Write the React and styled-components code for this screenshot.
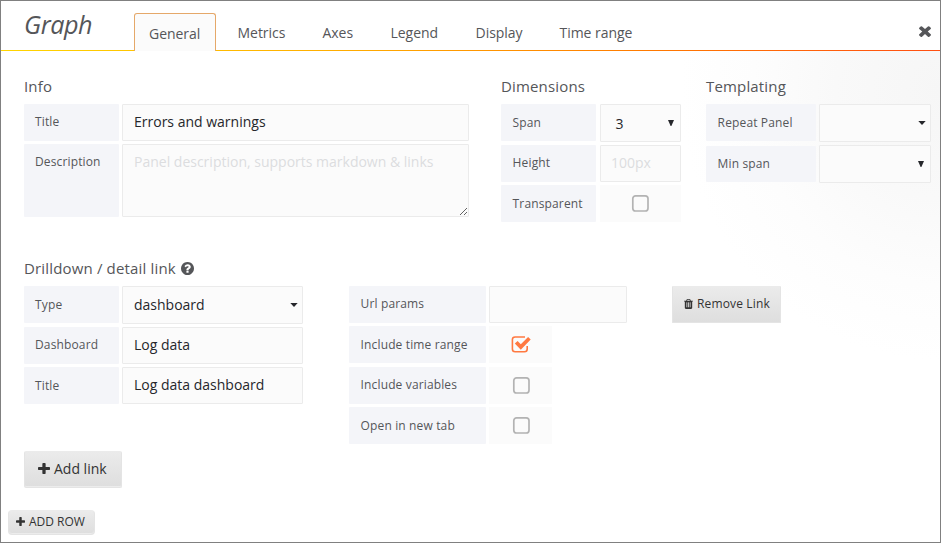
import React from "react";
import styled, { createGlobalStyle } from "styled-components";

const GlobalStyle = createGlobalStyle`
  *, *::before, *::after { box-sizing: border-box; }
  body { margin: 0; background: #fff; overflow: hidden; }
  body, button, input, textarea { font-family: "Open Sans", sans-serif; }
`;

const Frame = styled.div`
  width: 941px;
  height: 543px;
  border: 1px solid #808080;
  display: flex;
  flex-direction: column;
  color: #555659;
  background: #fff;
`;

const Header = styled.header`
  flex: none;
  height: 50px;
  display: flex;
  align-items: flex-start;
  padding: 0 9px 0 23px;
  background: linear-gradient(90deg, #ffd500, #ffaa00 38%, #ff7800 70%, #ff4f12) bottom / 100% 1px no-repeat;
`;

const PanelTitle = styled.h1`
  margin: 0;
  width: 110px;
  padding-top: 4px;
  font-size: 25.2px;
  line-height: 38px;
  font-weight: 400;
  font-style: italic;
  letter-spacing: -0.45px;
`;

const Tabs = styled.nav`
  flex: 1;
  display: flex;
`;

const Tab = styled.a`
  height: ${(p) => (p.$active ? 38 : 37)}px;
  margin: ${(p) => (p.$active ? "12px 7px 0 0" : "13px 7px 0 0")};
  padding: 0 ${(p) => (p.$active ? 14 : 13.5)}px;
  border: 1px solid ${(p) => (p.$active ? "#e5a869" : "transparent")};
  border-bottom: 0;
  border-radius: 3px 3px 0 0;
  background: ${(p) => (p.$active ? "#fbfbfb" : "transparent")};
  width: ${(p) => p.$w}px;
  line-height: ${(p) => (p.$active ? 40 : 36)}px;
  font-size: 14px;
  letter-spacing: -0.03px;
  white-space: nowrap;
`;

const CloseButton = styled.button`
  display: flex;
  margin: 24px 0 0;
  padding: 0;
  border: 0;
  background: none;
  color: #555659;
`;

const Body = styled.main`
  flex: 1;
  display: flex;
  flex-direction: column;
  align-items: flex-start;
  padding: 23px 0 0 23px;
  background: radial-gradient(ellipse 260px 270px at 100% 8%, #f6f6f6 0%, #f9f9f9 40%, #fdfdfd 72%, rgba(255, 255, 255, 0) 100%);
`;

const TopSections = styled.div`
  display: flex;
  height: 182px;
`;

const Section = styled.section`
  width: ${(p) => p.$w}px;
  margin-right: ${(p) => p.$gap || 0}px;
`;

const Heading = styled.h2`
  display: flex;
  align-items: center;
  gap: 5px;
  height: 24px;
  margin: 0 0 6px;
  font-size: 15px;
  font-weight: 400;
  letter-spacing: 0.16px;
  white-space: nowrap;
`;

const Rows = styled.div`
  display: flex;
  flex-direction: column;
  width: ${(p) => p.$w}px;
`;

const Row = styled.div`
  display: flex;
  align-items: flex-start;
  gap: ${(p) => p.$gap || 3}px;
  height: ${(p) => p.$h || 41}px;
`;

const Label = styled.label`
  flex: none;
  width: ${(p) => p.$w || 95}px;
  height: ${(p) => p.$h || 37}px;
  margin-top: ${(p) => p.$top || 0}px;
  padding-left: ${(p) => (p.$w ? 11.6 : 11)}px;
  border-radius: 1px;
  background: #f4f5f9;
  font-size: 12px;
  line-height: ${(p) => p.$line || 36}px;
  letter-spacing: 0.14px;
  white-space: nowrap;
`;

const fieldStyle = `
  border: 1px solid #ebebeb;
  border-radius: 1px;
  background: #fbfbfb;
  font-size: 14px;
  color: #26272b;
  outline: 0;
  margin: 0;
  &::placeholder { color: #dcdddf; opacity: 1; }
`;

const Input = styled.input`
  ${fieldStyle}
  flex: 1;
  min-width: 0;
  height: 37px;
  padding: 0 ${(p) => (p.$left ? 10 : 11)}px 2px;
`;

const TextArea = styled.textarea`
  ${fieldStyle}
  flex: 1;
  height: 73px;
  padding: 7px 11px;
  line-height: 19px;
  resize: vertical;
`;

const Select = styled.div`
  ${fieldStyle}
  flex: 1;
  height: 38px;
  display: flex;
  align-items: center;
  justify-content: space-between;
  padding: 0 ${(p) => p.$right}px ${(p) => p.$lift || 0}px ${(p) => p.$left || 11}px;
`;

const CheckCell = styled.div`
  width: ${(p) => p.$w || 63}px;
  height: 37px;
  display: flex;
  align-items: center;
  justify-content: center;
  padding-right: ${(p) => (p.$w ? 1 : 0)}px;
  background: #fbfbfb;
`;

const Links = styled.div`
  display: flex;
  align-items: flex-start;
`;

const LinkColumn = styled(Rows)`
  margin-right: ${(p) => p.$gap}px;
`;

const Button = styled.button`
  display: flex;
  align-items: center;
  justify-content: flex-start;
  gap: ${(p) => p.$gap || 3}px;
  width: ${(p) => p.$w}px;
  height: ${(p) => p.$h || 37}px;
  margin: 0;
  padding: 0 0 2px ${(p) => p.$left}px;
  border: 1px solid #e4e4e4;
  border-top-color: #ebebeb;
  border-radius: ${(p) => p.$radius || 1}px;
  background: linear-gradient(#ebebeb, #dedede);
  box-shadow: ${(p) => (p.$raised ? "inset 0 -1px 0 #ececec" : "none")};
  font-size: ${(p) => p.$size}px;
  letter-spacing: ${(p) => p.$spacing || 0}px;
  color: #333;
  white-space: nowrap;
`;

const AddRowButton = styled(Button)`
  margin: 22px 0 0 -16px;
`;

const Glyph = styled.svg`
  flex: none;
  display: block;
  fill: currentColor;
`;

const paths = {
  times:
    "M1490 1322q0 40-28 68l-136 136q-28 28-68 28t-68-28l-294-294-294 294q-28 28-68 28t-68-28l-136-136q-28-28-28-68t28-68l294-294-294-294q-28-28-28-68t28-68l136-136q28-28 68-28t68 28l294 294 294-294q28-28 68-28t68 28l136 136q28 28 28 68t-28 68l-294 294 294 294q28 28 28 68z",
  plus:
    "M1600 736v192q0 40-28 68t-68 28h-416v416q0 40-28 68t-68 28h-192q-40 0-68-28t-28-68v-416h-416q-40 0-68-28t-28-68v-192q0-40 28-68t68-28h416v-416q0-40 28-68t68-28h192q40 0 68 28t28 68v416h416q40 0 68 28t28 68z",
  question:
    "M1024 1376v-192q0-14-9-23t-23-9h-192q-14 0-23 9t-9 23v192q0 14 9 23t23 9h192q14 0 23-9t9-23zm256-672q0-88-55.5-163t-138.5-116-170-41q-243 0-371 213-15 24 8 42l132 100q7 6 19 6 16 0 25-12 53-68 86-92 34-24 86-24 48 0 85.5 26t37.5 59q0 38-20 61t-68 45q-63 28-115.5 86.5t-52.5 125.5v36q0 14 9 23t23 9h192q14 0 23-9t9-23q0-19 21.5-49.5t54.5-49.5q32-18 49-28.5t46-35 44.5-48 28-60.5 12.5-81zm384 192q0 209-103 385.5t-279.5 279.5-385.5 103-385.5-103-279.5-279.5-103-385.5 103-385.5 279.5-279.5 385.5-103 385.5 103 279.5 279.5 103 385.5z",
  trash:
    "M704 1376v-704q0-14-9-23t-23-9h-64q-14 0-23 9t-9 23v704q0 14 9 23t23 9h64q14 0 23-9t9-23zm256 0v-704q0-14-9-23t-23-9h-64q-14 0-23 9t-9 23v704q0 14 9 23t23 9h64q14 0 23-9t9-23zm256 0v-704q0-14-9-23t-23-9h-64q-14 0-23 9t-9 23v704q0 14 9 23t23 9h64q14 0 23-9t9-23zm-544-992h448l-48-117q-7-9-17-11h-317q-10 2-17 11zm928 32v64q0 14-9 23t-23 9h-96v948q0 83-47 143.5t-113 60.5h-832q-66 0-113-58.5t-47-141.5v-952h-96q-14 0-23-9t-9-23v-64q0-14 9-23t23-9h309l70-167q15-37 54-63t79-26h320q40 0 79 26t54 63l70 167h309q14 0 23 9t9 23z",
};

const Icon = ({ name, w, box = "128 128 1536 1536", h = w }) => (
  <Glyph width={w} height={h} viewBox={box} preserveAspectRatio="none">
    <path d={paths[name]} />
  </Glyph>
);

const Arrow = ({ caret }) =>
  caret ? (
    <Glyph width="8" height="4" viewBox="0 0 8 4"><path d="M.3 0h7.4L4 4z" /></Glyph>
  ) : (
    <Glyph width="6" height="6" viewBox="0 0 6 6"><path d="M0 0h6L3.4 6h-.8z" /></Glyph>
  );

const Check = ({ checked }) => (
  <Glyph width="22" height="19" viewBox="0 0 22 19">
    {checked ? (
      <>
        <path
          d="M15 2H5.1Q2.4 2 2.4 4.6v9.4q0 2.7 2.7 2.7h9.4q2.7 0 2.7-2.7V11"
          fill="none"
          stroke="#ff7941"
          strokeWidth="1.6"
        />
        <path d="M4.8 8.6l2.8-2.7 3.2 3.3 7.3-7.2 2.6 2.6-9.9 10.2z" fill="#ff7941" />
      </>
    ) : (
      <rect x="3.8" y="1.8" width="15.2" height="15.2" rx="2.8" fill="none" stroke="#b3b3b3" strokeWidth="1.7" />
    )}
  </Glyph>
);

const tabs = [
  ["General", 82],
  ["Metrics", 78],
  ["Axes", 61],
  ["Legend", 78],
  ["Display", 77],
  ["Time range", 110],
];

export default function App() {
  return (
    <>
      <GlobalStyle />
      <Frame>
        <Header>
          <PanelTitle>Graph</PanelTitle>
          <Tabs>
            {tabs.map(([name, w], i) => (
              <Tab key={name} $active={i === 0} $w={w}>{name}</Tab>
            ))}
          </Tabs>
          <CloseButton aria-label="Close">
            <Icon name="times" w={12} box="302 238 1188 1316" />
          </CloseButton>
        </Header>
        <Body>
          <TopSections>
            <Section $w={445} $gap={32}>
              <Heading>Info</Heading>
              <Row $h={40}>
                <Label>Title</Label>
                <Input defaultValue="Errors and warnings" />
              </Row>
              <Row>
                <Label $h={73}>Description</Label>
                <TextArea placeholder="Panel description, supports markdown & links" />
              </Row>
            </Section>
            <Section $w={180} $gap={25}>
              <Heading>Dimensions</Heading>
              <Row $gap={4}>
                <Label $w={95} $line={38}>Span</Label>
                <Select $right={6} $left={14.5}>3<Arrow /></Select>
              </Row>
              <Row $gap={4} $h={40}>
                <Label $w={95}>Height</Label>
                <Input placeholder="100px" $left />
              </Row>
              <Row $gap={4}>
                <Label $w={95} $line={38}>Transparent</Label>
                <CheckCell $w={81}><Check /></CheckCell>
              </Row>
            </Section>
            <Section $w={225}>
              <Heading>Templating</Heading>
              <Row>
                <Label $w={110} $line={38}>Repeat Panel</Label>
                <Select $right={4}><span /><Arrow caret /></Select>
              </Row>
              <Row>
                <Label $w={110} $top={1} $h={36}>Min span</Label>
                <Select $right={6}><span /><Arrow /></Select>
              </Row>
            </Section>
          </TopSections>
          <Heading>
            Drilldown / detail link
            <Icon name="question" w={13} />
          </Heading>
          <Links>
            <LinkColumn $w={279} $gap={46}>
              <Row>
                <Label $line={38}>Type</Label>
                <Select $right={4} $lift={1}>dashboard<Arrow caret /></Select>
              </Row>
              <Row $h={40}>
                <Label>Dashboard</Label>
                <Input defaultValue="Log data" />
              </Row>
              <Row $h={84}>
                <Label $line={38}>Title</Label>
                <Input defaultValue="Log data dashboard" />
              </Row>
            </LinkColumn>
            <LinkColumn $w={278} $gap={45}>
              <Row $h={40}>
                <Label $w={137}>Url params</Label>
                <Input />
              </Row>
              <Row>
                <Label $w={137} $line={38}>Include time range</Label>
                <CheckCell><Check checked /></CheckCell>
              </Row>
              <Row $h={40}>
                <Label $w={137}>Include variables</Label>
                <CheckCell><Check /></CheckCell>
              </Row>
              <Row>
                <Label $w={137} $line={38}>Open in new tab</Label>
                <CheckCell><Check /></CheckCell>
              </Row>
            </LinkColumn>
            <Button $w={109} $size={12} $spacing={0.15} $left={11} $gap={4}>
              <Icon name="trash" w={9} h={10} box="192 128 1408 1536" />
              Remove Link
            </Button>
          </Links>
          <Button $w={98} $size={14} $gap={4} $left={13} $raised $radius={2}>
            <Icon name="plus" w={12} h={11} box="192 128 1408 1408" />
            Add link
          </Button>
          <AddRowButton $w={87} $h={25} $size={12} $gap={4} $left={7} $raised $radius={4}>
            <Icon name="plus" w={9} box="192 128 1408 1408" />
            ADD ROW
          </AddRowButton>
        </Body>
      </Frame>
    </>
  );
}
